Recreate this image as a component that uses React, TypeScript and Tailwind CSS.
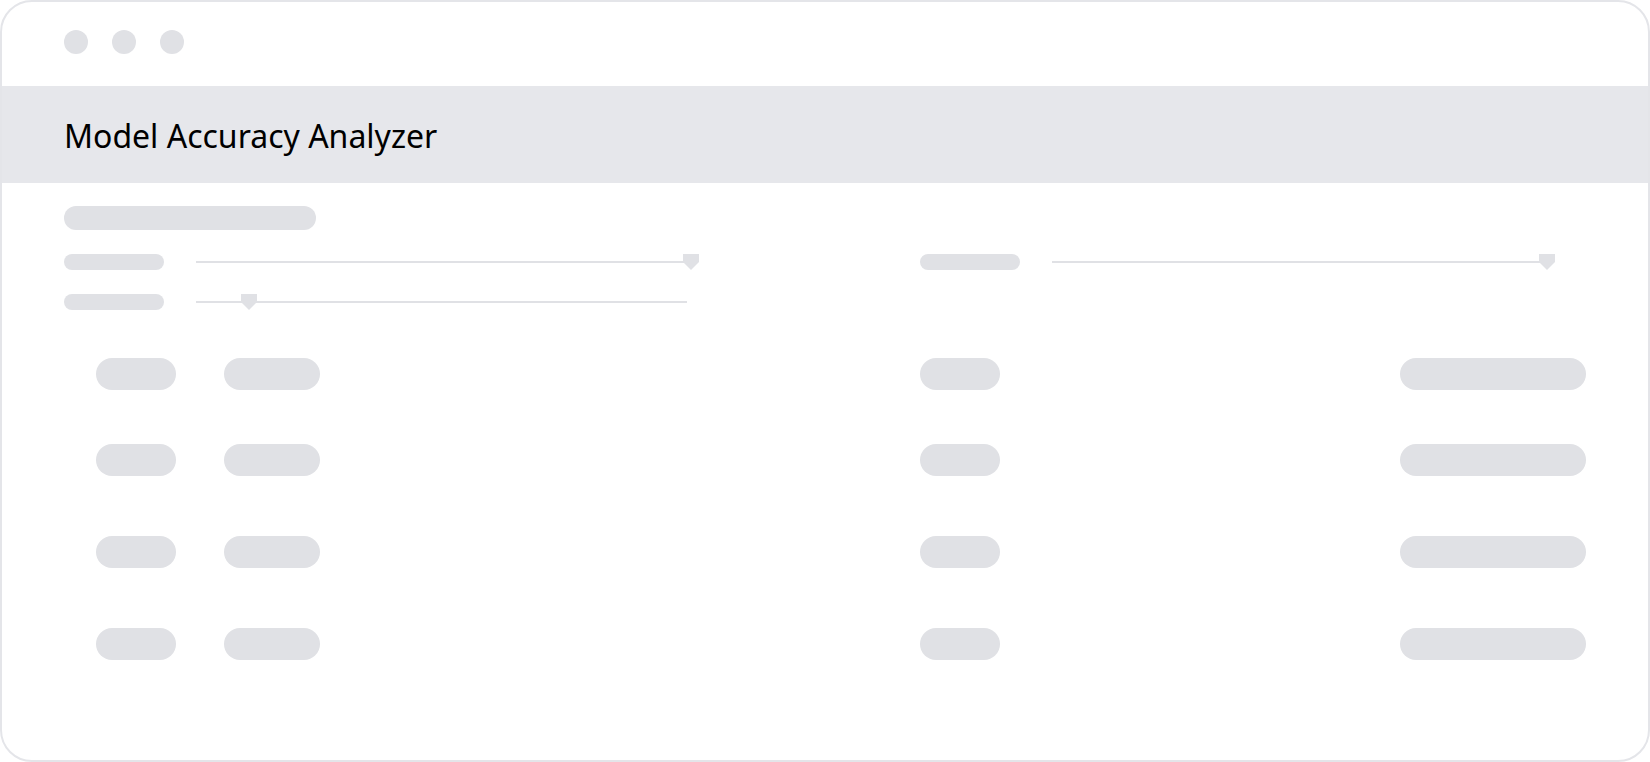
import React from 'react';

const pill = 'bg-[#e0e1e5] rounded-full';

const Thumb: React.FC<{ className: string }> = ({ className }) => (
  <svg
    width="16"
    height="16"
    viewBox="0 0 16 16"
    className={`absolute top-1/2 -translate-y-1/2 ${className}`}
  >
    <polygon points="0,0 16,0 16,8 8,16 0,8" fill="#e0e1e5" />
  </svg>
);

interface SliderRowProps {
  thumb: string;
}

const SliderRow: React.FC<SliderRowProps> = ({ thumb }) => (
  <div className="flex items-center h-4">
    <div className={`${pill} w-[100px] h-4`} />
    <div className="relative ml-8 w-[491px] h-[2px] bg-[#e0e1e5] -mt-[1px]">
      <Thumb className={thumb} />
    </div>
  </div>
);

const TableRow: React.FC<{ header?: boolean }> = ({ header }) => (
  <div
    className={`grid grid-cols-[128px_696px_1fr_auto] items-center ${
      header ? 'py-6' : 'py-[30px]'
    }`}
  >
    <div className="pl-8">
      <div className={`${pill} w-20 h-8`} />
    </div>
    <div className="pl-8">
      <div className={`${pill} w-24 h-8`} />
    </div>
    <div className="pl-8">
      <div className={`${pill} w-20 h-8`} />
    </div>
    <div className="flex justify-end">
      <div className={`${pill} w-[186px] h-8`} />
    </div>
  </div>
);

export default function App() {
  return (
    <div className="w-[1650px] h-[762px] bg-white">
      <div
        className="w-full h-full border-2 border-[#e4e5e9] rounded-[32px] overflow-hidden flex flex-col"
        style={{ fontFamily: '"Noto Sans", Roboto, sans-serif' }}
      >
        <div className="flex gap-6 px-[62px] pt-[28px] pb-[32px]">
          <div className="w-6 h-6 rounded-full bg-[#e0e1e5]" />
          <div className="w-6 h-6 rounded-full bg-[#e0e1e5]" />
          <div className="w-6 h-6 rounded-full bg-[#e0e1e5]" />
        </div>

        <div className="h-[97px] bg-[#e6e7eb] flex items-center px-[62px]">
          <h1 className="text-[32px] leading-none text-black font-normal pt-[3px]">
            Model Accuracy Analyzer
          </h1>
        </div>

        <div className="px-[62px] pt-[23px] flex flex-col gap-6">
          <div className={`${pill} w-[252px] h-6`} />

          <div className="grid grid-cols-2 gap-x-[190px]">
            <div className="flex flex-col gap-6">
              <SliderRow thumb="right-[-12px]" />
              <SliderRow thumb="left-[45px]" />
            </div>
            <div className="flex flex-col gap-6">
              <SliderRow thumb="right-[-12px]" />
            </div>
          </div>

          <div className="flex flex-col">
            <TableRow header />
            <TableRow />
            <TableRow />
            <TableRow />
          </div>
        </div>
      </div>
    </div>
  );
}
